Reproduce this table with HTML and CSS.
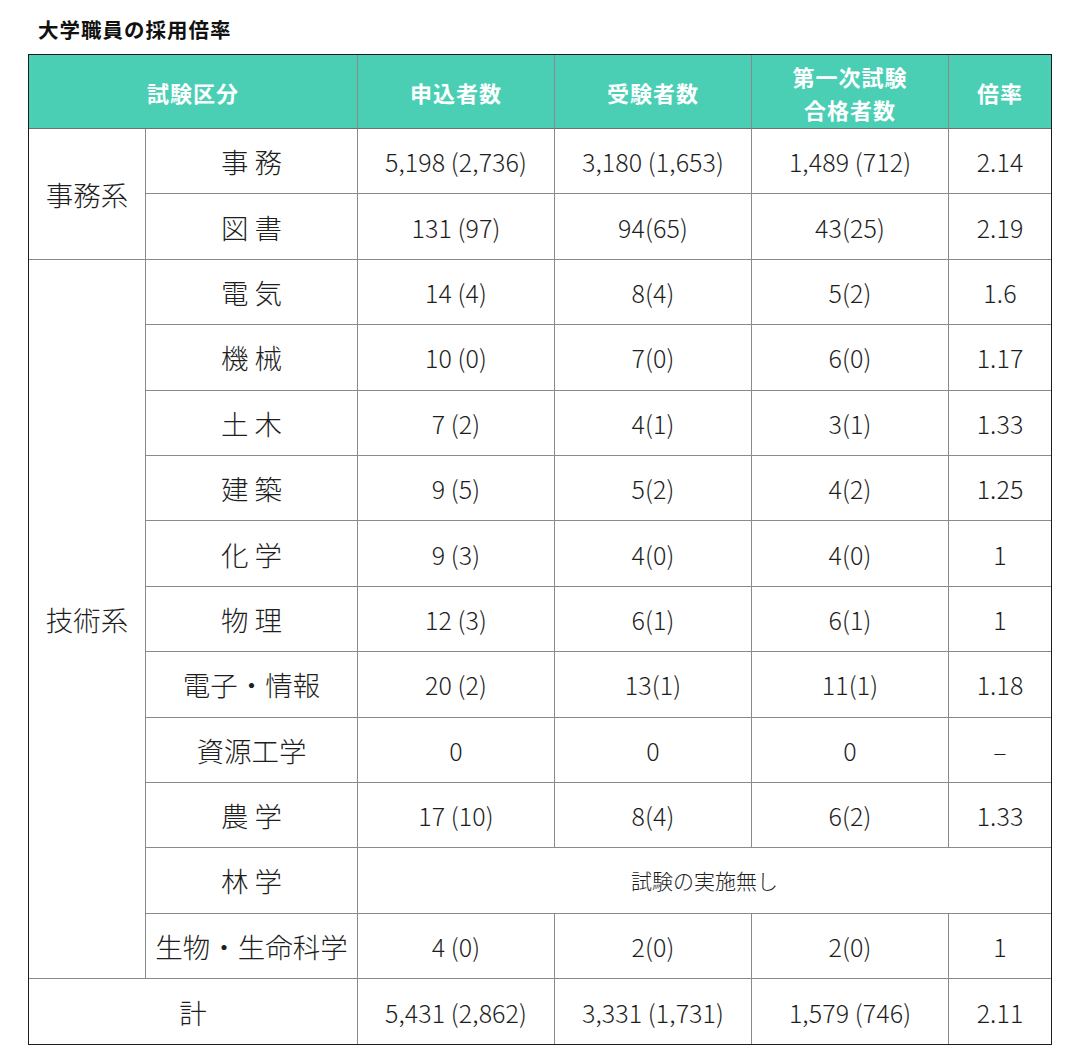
FILE: index.html
```html
<!DOCTYPE html>
<html lang="ja">
<head>
<meta charset="utf-8">
<link rel="stylesheet" href="styles.css">
</head>
<body>
<div class="page">
  <h1 class="title">大学職員の採用倍率</h1>
  <table class="rate">
    <colgroup>
      <col class="c1"><col class="c2"><col class="c3"><col class="c4"><col class="c5"><col class="c6">
    </colgroup>
    <thead>
      <tr class="head">
        <th colspan="2">試験区分</th>
        <th>申込者数</th>
        <th>受験者数</th>
        <th>第一次試験<br>合格者数</th>
        <th class="last">倍率</th>
      </tr>
    </thead>
    <tbody>
      <tr>
        <td rowspan="2" class="group">事務系</td>
        <td class="jp">事 務</td>
        <td class="num">5,198 (2,736)</td>
        <td class="num">3,180 (1,653)</td>
        <td class="num">1,489 (712)</td>
        <td class="num last">2.14</td>
      </tr>
      <tr>
        <td class="jp">図 書</td>
        <td class="num">131 (97)</td>
        <td class="num">94(65)</td>
        <td class="num">43(25)</td>
        <td class="num last">2.19</td>
      </tr>
      <tr>
        <td rowspan="11" class="group">技術系</td>
        <td class="jp">電 気</td>
        <td class="num">14 (4)</td>
        <td class="num">8(4)</td>
        <td class="num">5(2)</td>
        <td class="num last">1.6</td>
      </tr>
      <tr>
        <td class="jp">機 械</td>
        <td class="num">10 (0)</td>
        <td class="num">7(0)</td>
        <td class="num">6(0)</td>
        <td class="num last">1.17</td>
      </tr>
      <tr>
        <td class="jp">土 木</td>
        <td class="num">7 (2)</td>
        <td class="num">4(1)</td>
        <td class="num">3(1)</td>
        <td class="num last">1.33</td>
      </tr>
      <tr>
        <td class="jp">建 築</td>
        <td class="num">9 (5)</td>
        <td class="num">5(2)</td>
        <td class="num">4(2)</td>
        <td class="num last">1.25</td>
      </tr>
      <tr>
        <td class="jp">化 学</td>
        <td class="num">9 (3)</td>
        <td class="num">4(0)</td>
        <td class="num">4(0)</td>
        <td class="num last">1</td>
      </tr>
      <tr>
        <td class="jp">物 理</td>
        <td class="num">12 (3)</td>
        <td class="num">6(1)</td>
        <td class="num">6(1)</td>
        <td class="num last">1</td>
      </tr>
      <tr>
        <td class="jp">電子・情報</td>
        <td class="num">20 (2)</td>
        <td class="num">13(1)</td>
        <td class="num">11(1)</td>
        <td class="num last">1.18</td>
      </tr>
      <tr>
        <td class="jp">資源工学</td>
        <td class="num">0</td>
        <td class="num">0</td>
        <td class="num">0</td>
        <td class="num last">–</td>
      </tr>
      <tr>
        <td class="jp">農 学</td>
        <td class="num">17 (10)</td>
        <td class="num">8(4)</td>
        <td class="num">6(2)</td>
        <td class="num last">1.33</td>
      </tr>
      <tr>
        <td class="jp">林 学</td>
        <td colspan="4" class="note last">試験の実施無し</td>
      </tr>
      <tr>
        <td class="jp">生物・生命科学</td>
        <td class="num">4 (0)</td>
        <td class="num">2(0)</td>
        <td class="num">2(0)</td>
        <td class="num last">1</td>
      </tr>
      <tr class="total">
        <td colspan="2" class="jp">計</td>
        <td class="num">5,431 (2,862)</td>
        <td class="num">3,331 (1,731)</td>
        <td class="num">1,579 (746)</td>
        <td class="num last">2.11</td>
      </tr>
    </tbody>
  </table>
</div>
</body>
</html>
```

FILE: styles.css
```css
html, body {
  margin: 0;
  padding: 0;
  background: #ffffff;
}

body {
  font-family: "Noto Sans CJK JP", "Noto Sans", sans-serif;
  color: #1e1e1e;
}

.page {
  padding: 14px 0 0 28px;
}

.title {
  margin: 0 0 10px 10px;
  font-size: 20.5px;
  line-height: 30px;
  font-weight: 700;
  letter-spacing: 1px;
  color: #111;
}

.rate {
  border-collapse: separate;
  border-spacing: 0;
  border: 1px solid #1c1c1c;
  table-layout: fixed;
  width: 1024px;
}

.c1 { width: 117px; }
.c2 { width: 212px; }
.c3 { width: 197px; }
.c4 { width: 197px; }
.c5 { width: 197px; }
.c6 { width: 102px; }

.rate th,
.rate td {
  padding: 0;
  text-align: center;
  vertical-align: middle;
  border-right: 1px solid #8a8a8a;
  border-bottom: 1px solid #8a8a8a;
}

.rate .last {
  border-right: none;
}

.rate .total td {
  border-bottom: none;
}

.head {
  height: 74px;
}

.head th {
  background: #4acfb5;
  color: #ffffff;
  font-size: 22px;
  line-height: 33px;
  font-weight: 700;
  letter-spacing: 1px;
  border-bottom-color: #6f6f6f;
  padding-top: 2px;
}

.rate tbody tr {
  height: 65.4px;
}

.group {
  font-size: 27.5px;
  font-weight: 300;
}

.jp {
  font-size: 27.5px;
  font-weight: 300;
}

.num {
  font-size: 25px;
  font-weight: 300;
  letter-spacing: 0.1px;
}

.note {
  font-size: 21px;
  font-weight: 300;
}
```
